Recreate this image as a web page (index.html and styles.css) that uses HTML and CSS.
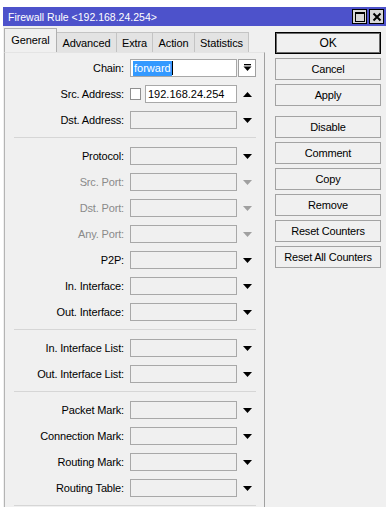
FILE: index.html
```html
<!DOCTYPE html>
<html>
<head>
<meta charset="utf-8">
<title>Firewall Rule</title>
<link rel="stylesheet" href="styles.css">
</head>
<body>
<div class="window">
  <div class="titlebar">
    <span class="title">Firewall Rule &lt;192.168.24.254&gt;</span>
    <div class="tbtns">
      <span class="tb"><svg width="10" height="10" viewBox="0 0 10 10"><rect x="0.5" y="0.5" width="9" height="9" fill="none" stroke="#000"/><rect x="0" y="0" width="10" height="2" fill="#000"/></svg></span>
      <span class="tb"><svg width="10" height="10" viewBox="0 0 10 10"><path d="M1.5 1.5 L8.5 8.5 M8.5 1.5 L1.5 8.5" stroke="#000" stroke-width="2"/></svg></span>
    </div>
  </div>
  <div class="body">
    <div class="left">
      <div class="tabs">
        <span class="tab active t-general">General</span>
        <span class="tab t-advanced">Advanced</span>
        <span class="tab t-extra">Extra</span>
        <span class="tab t-action">Action</span>
        <span class="tab t-stats">Statistics</span>
      </div>
      <div class="panel">
        <div class="row">
          <span class="label">Chain:</span>
          <span class="field white"><span class="sel">forward</span><span class="caret"></span></span>
          <span class="dd"><svg width="9" height="8" viewBox="0 0 9 8"><rect x="1" y="0" width="7" height="1.3" fill="#000"/><polygon points="0.5,2.5 8.5,2.5 4.5,7" fill="#000"/></svg></span>
        </div>
        <div class="row">
          <span class="label">Src. Address:</span>
          <span class="check"></span>
          <span class="field white short">192.168.24.254</span>
          <span class="arrow"><svg width="9" height="5" viewBox="0 0 9 5"><polygon points="0,5 9,5 4.5,0" fill="#000"/></svg></span>
        </div>
        <div class="row">
          <span class="label">Dst. Address:</span>
          <span class="field"></span>
          <span class="arrow"><svg width="9" height="5" viewBox="0 0 9 5"><polygon points="0,0 9,0 4.5,5" fill="#000"/></svg></span>
        </div>
        <div class="sep"></div>
        <div class="row">
          <span class="label">Protocol:</span>
          <span class="field"></span>
          <span class="arrow"><svg width="9" height="5" viewBox="0 0 9 5"><polygon points="0,0 9,0 4.5,5" fill="#000"/></svg></span>
        </div>
        <div class="row dis">
          <span class="label">Src. Port:</span>
          <span class="field"></span>
          <span class="arrow"><svg width="9" height="5" viewBox="0 0 9 5"><polygon points="0,0 9,0 4.5,5" fill="#a0a0a0"/></svg></span>
        </div>
        <div class="row dis">
          <span class="label">Dst. Port:</span>
          <span class="field"></span>
          <span class="arrow"><svg width="9" height="5" viewBox="0 0 9 5"><polygon points="0,0 9,0 4.5,5" fill="#a0a0a0"/></svg></span>
        </div>
        <div class="row dis">
          <span class="label">Any. Port:</span>
          <span class="field"></span>
          <span class="arrow"><svg width="9" height="5" viewBox="0 0 9 5"><polygon points="0,0 9,0 4.5,5" fill="#a0a0a0"/></svg></span>
        </div>
        <div class="row">
          <span class="label">P2P:</span>
          <span class="field"></span>
          <span class="arrow"><svg width="9" height="5" viewBox="0 0 9 5"><polygon points="0,0 9,0 4.5,5" fill="#000"/></svg></span>
        </div>
        <div class="row">
          <span class="label">In. Interface:</span>
          <span class="field"></span>
          <span class="arrow"><svg width="9" height="5" viewBox="0 0 9 5"><polygon points="0,0 9,0 4.5,5" fill="#000"/></svg></span>
        </div>
        <div class="row">
          <span class="label">Out. Interface:</span>
          <span class="field"></span>
          <span class="arrow"><svg width="9" height="5" viewBox="0 0 9 5"><polygon points="0,0 9,0 4.5,5" fill="#000"/></svg></span>
        </div>
        <div class="sep"></div>
        <div class="row">
          <span class="label">In. Interface List:</span>
          <span class="field"></span>
          <span class="arrow"><svg width="9" height="5" viewBox="0 0 9 5"><polygon points="0,0 9,0 4.5,5" fill="#000"/></svg></span>
        </div>
        <div class="row">
          <span class="label">Out. Interface List:</span>
          <span class="field"></span>
          <span class="arrow"><svg width="9" height="5" viewBox="0 0 9 5"><polygon points="0,0 9,0 4.5,5" fill="#000"/></svg></span>
        </div>
        <div class="sep"></div>
        <div class="row">
          <span class="label">Packet Mark:</span>
          <span class="field"></span>
          <span class="arrow"><svg width="9" height="5" viewBox="0 0 9 5"><polygon points="0,0 9,0 4.5,5" fill="#000"/></svg></span>
        </div>
        <div class="row">
          <span class="label">Connection Mark:</span>
          <span class="field"></span>
          <span class="arrow"><svg width="9" height="5" viewBox="0 0 9 5"><polygon points="0,0 9,0 4.5,5" fill="#000"/></svg></span>
        </div>
        <div class="row">
          <span class="label">Routing Mark:</span>
          <span class="field"></span>
          <span class="arrow"><svg width="9" height="5" viewBox="0 0 9 5"><polygon points="0,0 9,0 4.5,5" fill="#000"/></svg></span>
        </div>
        <div class="row">
          <span class="label">Routing Table:</span>
          <span class="field"></span>
          <span class="arrow"><svg width="9" height="5" viewBox="0 0 9 5"><polygon points="0,0 9,0 4.5,5" fill="#000"/></svg></span>
        </div>
        <div class="sep"></div>
      </div>
    </div>
    <div class="buttons">
      <span class="btn default">OK</span>
      <span class="btn">Cancel</span>
      <span class="btn">Apply</span>
      <span class="btn gap">Disable</span>
      <span class="btn">Comment</span>
      <span class="btn">Copy</span>
      <span class="btn">Remove</span>
      <span class="btn">Reset Counters</span>
      <span class="btn">Reset All Counters</span>
    </div>
  </div>
</div>
</body>
</html>
```

FILE: styles.css
```css
html, body {
  margin: 0;
  padding: 0;
  background: #ffffff;
}
body {
  font-family: "Liberation Sans", Arial, sans-serif;
  font-size: 11px;
  color: #000;
  padding-top: 7px;
  padding-left: 3px;
}
.window {
  width: 383px;
  height: 500px;
  overflow: hidden;
  background: #f0f0f0;
}
.titlebar {
  height: 19px;
  background: #4d52cb;
  display: flex;
  align-items: center;
  justify-content: space-between;
  color: #fff;
}
.title {
  padding-left: 5px;
  font-size: 10.5px;
  padding-top: 1px;
}
.tbtns {
  display: flex;
  gap: 2px;
  padding-right: 2px;
}
.tb {
  width: 13px;
  height: 13px;
  background: #d8d8d8;
  border: 1px solid #000;
  display: flex;
  align-items: center;
  justify-content: center;
}
.body {
  display: flex;
  align-items: flex-start;
}
.left {
  margin-left: 1px;
  width: 261px;
}
.tabs {
  height: 26px;
  display: flex;
  align-items: flex-end;
  letter-spacing: -0.1px;
}
.tab {
  height: 20px;
  box-sizing: border-box;
  background: #e3e3e3;
  border: 1px solid #c4c4c4;
  border-bottom: none;
  border-left: none;
  display: flex;
  align-items: center;
  justify-content: center;
  padding-top: 1px;
}
.tab.active {
  height: 24px;
  background: #f0f0f0;
  border: 1px solid #b0b0b0;
  border-bottom: none;
  padding-top: 0;
  padding-bottom: 2px;
}
.t-general { width: 53px; }
.t-advanced { width: 60px; }
.t-extra { width: 36px; }
.t-action { width: 42px; }
.t-stats { width: 54px; }
.panel {
  border-left: 1px solid #b4b4b4;
  border-right: 1px solid #a0a0a0;
  border-top: 1px solid #e4e4e4;
  padding-top: 2px;
  min-height: 460px;
}
.row {
  height: 26px;
  display: flex;
  align-items: center;
}
.label {
  width: 119px;
  margin-right: 6px;
  text-align: right;
  white-space: nowrap;
  letter-spacing: -0.15px;
}
.dis .label {
  color: #8a8a8a;
}
.field {
  width: 107px;
  height: 18px;
  box-sizing: border-box;
  border: 1px solid #a8a8a8;
  background: #f0f0f0;
  display: flex;
  align-items: center;
  padding-left: 2px;
  font-size: 11px;
}
.field.white {
  background: #fff;
}
.field.short {
  width: 92px;
  margin-left: 4px;
}
.sel {
  background: #3399ff;
  color: #fff;
  padding: 1px 1px 2px 1px;
  font-size: 11px;
}
.caret {
  width: 1px;
  height: 14px;
  background: #000;
}
.check {
  width: 11px;
  height: 12px;
  box-sizing: border-box;
  border: 1px solid #8f8f8f;
  background: #fff;
}
.dd {
  margin-left: 1px;
  width: 18px;
  height: 18px;
  box-sizing: border-box;
  border: 1px solid #a0a0a0;
  background: #fff;
  display: flex;
  align-items: center;
  justify-content: center;
}
.arrow {
  margin-left: 1px;
  width: 18px;
  height: 18px;
  display: flex;
  align-items: center;
  justify-content: center;
}
.sep {
  height: 4px;
  margin: 0 8px 5px 9px;
  border-bottom: 1px solid #d6d6d6;
  box-sizing: content-box;
}
.buttons {
  margin-left: 10px;
  margin-top: 6px;
  width: 106px;
  display: flex;
  flex-direction: column;
  gap: 4px;
}
.btn {
  height: 22px;
  box-sizing: border-box;
  border: 1px solid #a3a3a3;
  background: #f0f0f0;
  display: flex;
  align-items: center;
  justify-content: center;
  font-size: 11px;
  letter-spacing: -0.2px;
}
.btn.default {
  border: 1px solid #000;
  box-shadow: inset 0 0 0 1px #6a6a6a;
  font-size: 12px;
}
.btn.gap {
  margin-top: 6px;
}
```
